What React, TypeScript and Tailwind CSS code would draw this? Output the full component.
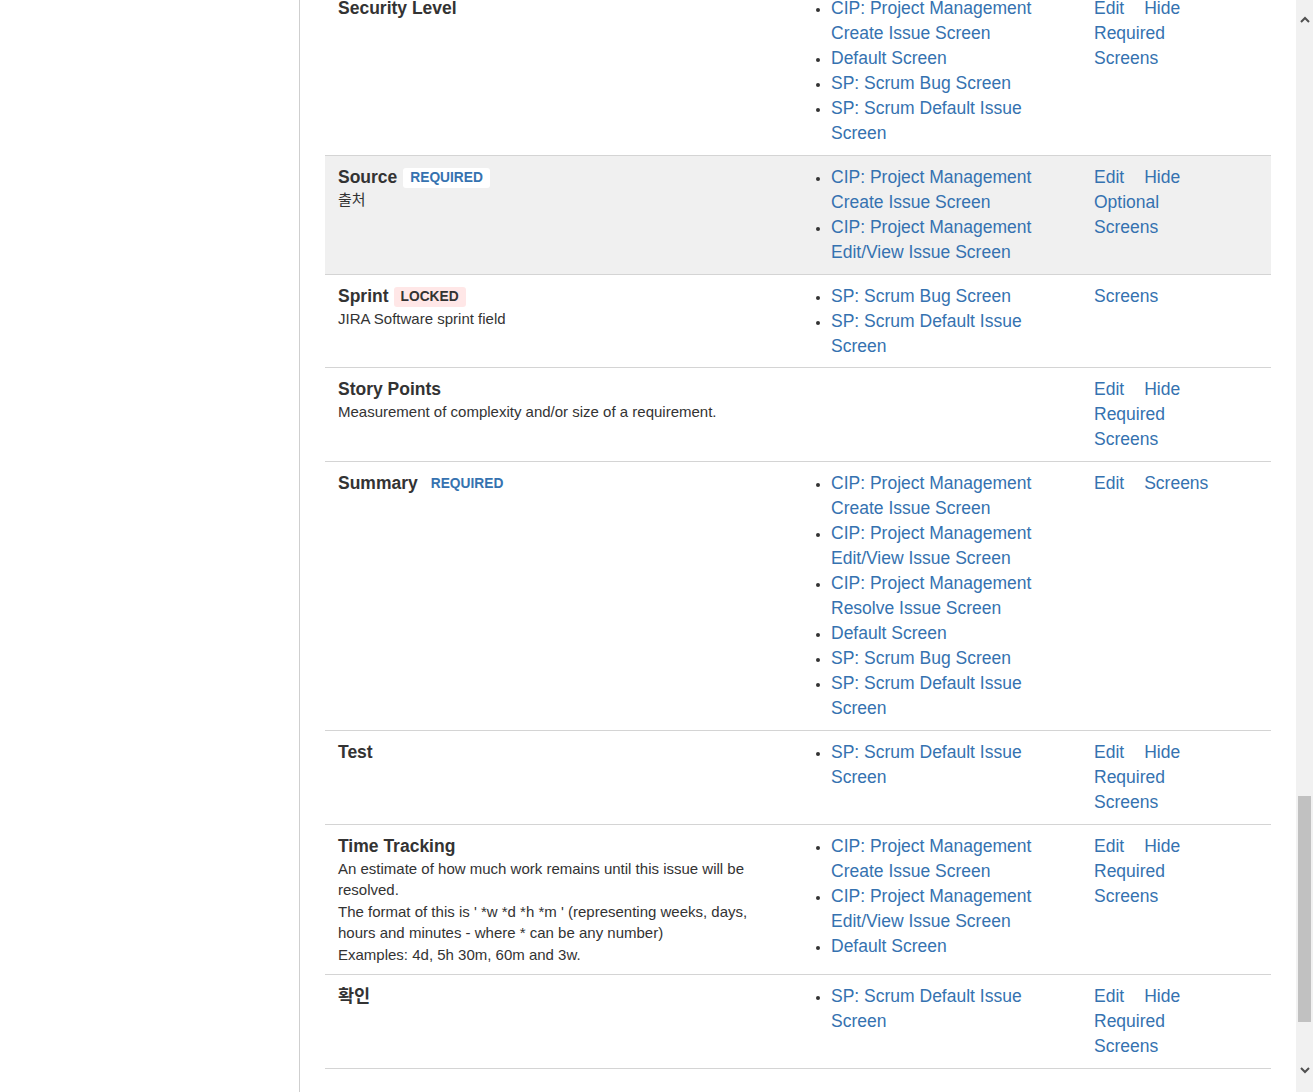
import type { ReactNode } from 'react';

interface FieldRow {
  name: string;
  badge?: 'required' | 'locked';
  desc?: ReactNode;
  screens: string[];
  actions: string[];
  shaded?: boolean;
  tight?: boolean;
}

const CIP_CREATE = 'CIP: Project Management Create Issue Screen';
const CIP_EDIT = 'CIP: Project Management Edit/View Issue Screen';
const CIP_RESOLVE = 'CIP: Project Management Resolve Issue Screen';
const DEFAULT = 'Default Screen';
const SP_BUG = 'SP: Scrum Bug Screen';
const SP_DEFAULT = 'SP: Scrum Default Issue Screen';

const rows: FieldRow[] = [
  {
    name: 'Security Level',
    screens: [CIP_CREATE, DEFAULT, SP_BUG, SP_DEFAULT],
    actions: ['Edit', 'Hide', 'Required', 'Screens'],
  },
  {
    name: 'Source',
    badge: 'required',
    desc: '출처',
    screens: [CIP_CREATE, CIP_EDIT],
    actions: ['Edit', 'Hide', 'Optional', 'Screens'],
    shaded: true,
  },
  {
    name: 'Sprint',
    badge: 'locked',
    desc: 'JIRA Software sprint field',
    screens: [SP_BUG, SP_DEFAULT],
    actions: ['Screens'],
    tight: true,
  },
  {
    name: 'Story Points',
    desc: 'Measurement of complexity and/or size of a requirement.',
    screens: [],
    actions: ['Edit', 'Hide', 'Required', 'Screens'],
  },
  {
    name: 'Summary',
    badge: 'required',
    screens: [CIP_CREATE, CIP_EDIT, CIP_RESOLVE, DEFAULT, SP_BUG, SP_DEFAULT],
    actions: ['Edit', 'Screens'],
  },
  {
    name: 'Test',
    screens: [SP_DEFAULT],
    actions: ['Edit', 'Hide', 'Required', 'Screens'],
  },
  {
    name: 'Time Tracking',
    desc: (
      <>
        An estimate of how much work remains until this issue will be resolved.
        <br />
        The format of this is ' *w *d *h *m ' (representing weeks, days, hours and minutes - where * can be any number)
        <br />
        Examples: 4d, 5h 30m, 60m and 3w.
      </>
    ),
    screens: [CIP_CREATE, CIP_EDIT, DEFAULT],
    actions: ['Edit', 'Hide', 'Required', 'Screens'],
  },
  {
    name: '확인',
    screens: [SP_DEFAULT],
    actions: ['Edit', 'Hide', 'Required', 'Screens'],
  },
];

function Badge({ kind, shaded }: { kind: 'required' | 'locked'; shaded?: boolean }) {
  if (kind === 'locked') {
    return (
      <span className="ml-[5px] inline-block rounded-[3px] bg-[#ffe7e7] px-[7px] text-[13.75px] font-bold leading-[20px] text-[#333] uppercase">
        Locked
      </span>
    );
  }
  return (
    <span
      className={
        'inline-block rounded-[3px] px-[7px] text-[13.75px] font-bold leading-[20px] text-[#3572b0] uppercase ' +
        (shaded ? 'ml-[6px] bg-white' : 'ml-[6px] bg-transparent')
      }
    >
      Required
    </span>
  );
}

function Row({ row }: { row: FieldRow }) {
  return (
    <div
      className={
        'flex border-b border-[#d4d4d4] pt-[9px] ' +
        (row.tight ? 'pb-[8px] ' : 'pb-[9px] ') +
        (row.shaded ? 'bg-[#f0f0f0]' : 'bg-white')
      }
    >
      <div className="w-[472px] shrink-0 px-[13px]">
        <div className="flex items-center text-[17.5px] font-bold leading-[25px] text-[#333]">
          <span>{row.name}</span>
          {row.badge && <Badge kind={row.badge} shaded={row.shaded} />}
        </div>
        {row.desc && <div className="mt-[-1px] text-[15px] leading-[21.4px] text-[#333]">{row.desc}</div>}
      </div>
      <div className="w-[284px] shrink-0 px-[13px]">
        {row.screens.length > 0 && (
          <ul className="list-disc pl-[21px] text-[17.5px] leading-[25px] marker:text-[13px] marker:text-[#333]">
            {row.screens.map((s, i) => (
              <li key={i} className="text-[#3572b0]">
                {s}
              </li>
            ))}
          </ul>
        )}
      </div>
      <div className="flex-1 px-[13px]">
        <div className="flex w-[140px] flex-wrap gap-x-[20px] text-[17.5px] leading-[25px] text-[#3572b0]">
          {row.actions.map((a) => (
            <span key={a}>{a}</span>
          ))}
        </div>
      </div>
    </div>
  );
}

function Scrollbar() {
  return (
    <div className="flex w-[17px] shrink-0 flex-col bg-[#f1f1f1]">
      <div className="flex h-[40px] items-center justify-center">
        <svg width="10" height="8" viewBox="0 0 10 8">
          <path d="M1 6 L5 2 L9 6" fill="none" stroke="#505050" strokeWidth="2" />
        </svg>
      </div>
      <div className="mx-[2px] mt-[756px] h-[226px] bg-[#c1c1c1]" />
      <div className="mt-auto flex h-[40px] items-center justify-center pb-[4px]">
        <svg width="10" height="8" viewBox="0 0 10 8">
          <path d="M1 2 L5 6 L9 2" fill="none" stroke="#505050" strokeWidth="2" />
        </svg>
      </div>
    </div>
  );
}

export default function App() {
  return (
    <div
      className="flex h-[1092px] overflow-hidden bg-white"
      style={{ fontFamily: '"Liberation Sans", Arial, "Noto Sans CJK KR", sans-serif' }}
    >
      <div className="w-[300px] shrink-0 border-r border-[#cfcfcf]" />
      <div className="flex-1 overflow-hidden px-[25px]">
        <div className="mt-[-13px]">
          {rows.map((r) => (
            <Row key={r.name} row={r} />
          ))}
        </div>
      </div>
      <Scrollbar />
    </div>
  );
}
